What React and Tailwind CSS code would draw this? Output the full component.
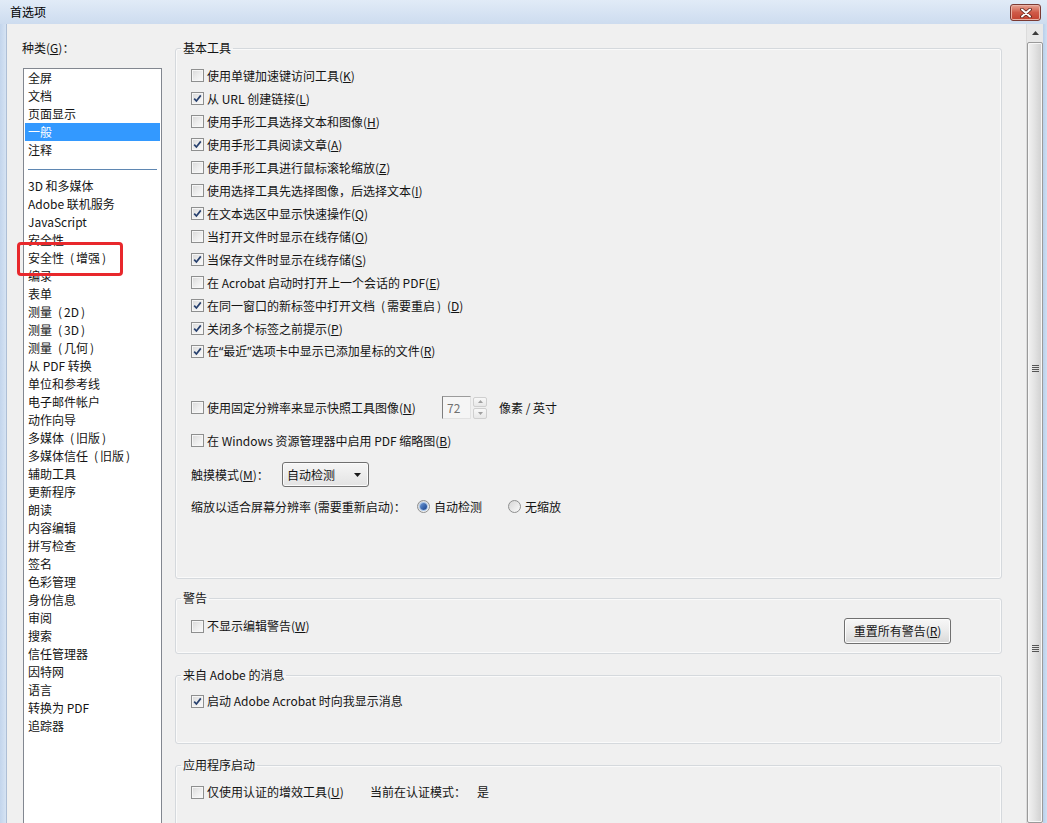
import React from "react";

function Check({ checked }) {
  return (
    <span className="relative flex-none w-[13px] h-[13px] border border-[#8e8f8f] bg-gradient-to-br from-[#d8d8d8] via-[#ececec] to-[#fbfbfb] shadow-[inset_0_0_0_1px_#f6f6f6]">
      {checked && (
        <svg className="absolute left-[1px] top-[1px]" width="9" height="9" viewBox="0 0 9 9">
          <polyline points="1.2,4.6 3.4,7 7.8,1.4" fill="none" stroke="#27406e" strokeWidth="1.7" />
        </svg>
      )}
    </span>
  );
}

function Radio({ checked }) {
  return (
    <span className="flex-none w-[13px] h-[13px] rounded-full border border-[#8e8f8f] bg-gradient-to-br from-[#d6d6d6] to-[#fafafa] flex items-center justify-center">
      {checked && <span className="w-[7px] h-[7px] rounded-full bg-gradient-to-br from-[#6f9ad6] to-[#123f8c] shadow-[0_0_0_1px_#a9c6ea]" />}
    </span>
  );
}

function CRow({ checked, children, className = "" }) {
  return (
    <div className={"flex items-center gap-[3px] " + className}>
      <Check checked={checked} />
      <span className="whitespace-nowrap">{children}</span>
    </div>
  );
}

function Group({ title, className = "", children }) {
  return (
    <fieldset className={"flex-none border border-[#d5d9dd] rounded-[3px] shadow-[inset_0_0_0_1px_#fafafa] " + className}>
      <legend className="ml-[5px] px-[2px] leading-[16px] whitespace-nowrap">{title}</legend>
      {children}
    </fieldset>
  );
}

const Q = ({ children }) => <span className="font-['Noto_Sans',sans-serif]">{children}</span>;
const LP = () => <span className="inline-block w-[12px] text-right pr-[2px]">(</span>;
const RP = () => <span className="inline-block w-[12px] text-left pl-[2px]">)</span>;

function FW({ text }) {
  const parts = [];
  let buf = "";
  [...text].forEach((ch, i) => {
    if (ch === "（" || ch === "）") {
      if (buf) parts.push(buf);
      buf = "";
      parts.push(ch === "（" ? <LP key={i} /> : <RP key={i} />);
    } else buf += ch;
  });
  if (buf) parts.push(buf);
  return <>{parts}</>;
}

const basic = [
  [false, <>使用单键加速键访问工具(<u>K</u>)</>],
  [true, <>从 URL 创建链接(<u>L</u>)</>],
  [false, <>使用手形工具选择文本和图像(<u>H</u>)</>],
  [true, <>使用手形工具阅读文章(<u>A</u>)</>],
  [false, <>使用手形工具进行鼠标滚轮缩放(<u>Z</u>)</>],
  [false, <>使用选择工具先选择图像，后选择文本(<u>I</u>)</>],
  [true, <>在文本选区中显示快速操作(<u>Q</u>)</>],
  [false, <>当打开文件时显示在线存储(<u>O</u>)</>],
  [true, <>当保存文件时显示在线存储(<u>S</u>)</>],
  [false, <>在 Acrobat 启动时打开上一个会话的 PDF(<u>E</u>)</>],
  [true, <>在同一窗口的新标签中打开文档<LP />需要重启<RP />(<u>D</u>)</>],
  [true, <>关闭多个标签之前提示(<u>P</u>)</>],
  [true, <>在<Q>“</Q>最近<Q>”</Q>选项卡中显示已添加星标的文件(<u>R</u>)</>],
];

const topItems = ["全屏", "文档", "页面显示", "一般", "注释"];
const items = [
  "3D 和多媒体", "Adobe 联机服务", "JavaScript", "安全性", "安全性（增强）", "编录", "表单",
  "测量（2D）", "测量（3D）", "测量（几何）", "从 PDF 转换", "单位和参考线", "电子邮件帐户",
  "动作向导", "多媒体（旧版）", "多媒体信任（旧版）", "辅助工具", "更新程序", "朗读", "内容编辑",
  "拼写检查", "签名", "色彩管理", "身份信息", "审阅", "搜索", "信任管理器", "因特网", "语言",
  "转换为 PDF", "追踪器",
];

function Grip({ className }) {
  return (
    <div className={"absolute left-[4px] w-[7px] flex flex-col gap-[1px] " + className}>
      <span className="h-[1px] bg-[#555]" />
      <span className="h-[1px] bg-[#555]" />
      <span className="h-[1px] bg-[#555]" />
      <span className="h-[1px] bg-[#555]" />
    </div>
  );
}

export default function App() {
  return (
    <div className="relative w-[1047px] h-[823px] overflow-hidden flex flex-col bg-[#f0f0f0] text-[12px] leading-[16px] text-[#141414] font-['Noto_Sans_CJK_SC','Microsoft_YaHei',sans-serif]">
      {/* Title bar */}
      <div className="flex-none h-[24px] flex items-start justify-between bg-gradient-to-b from-[#e1ebf7] to-[#cddcef]">
        <span className="pl-[10px] pt-[4px] leading-[16px] text-[#000]">首选项</span>
        <div className="mt-[4px] mr-[6px] w-[31px] h-[17px] rounded-[3px] border border-[#7b3a33] bg-gradient-to-b from-[#e6a394] via-[#cf5a48] to-[#c2412f] shadow-[inset_0_0_0_1px_#eab3a6] flex items-center justify-center">
          <svg width="12" height="10" viewBox="0 0 12 10">
            <path d="M2 1.5 L10 8.5 M10 1.5 L2 8.5" stroke="#5a2018" strokeWidth="3.6" strokeLinecap="round" />
            <path d="M2 1.5 L10 8.5 M10 1.5 L2 8.5" stroke="#ffffff" strokeWidth="2" strokeLinecap="round" />
          </svg>
        </div>
      </div>

      <div className="flex flex-1 min-h-0">
        {/* left frame */}
        <div className="flex-none w-[7px] bg-gradient-to-r from-[#c3d5ec] to-[#d6e3f3] border-r border-[#aebfd6]" />

        {/* content */}
        <div className="flex-1 flex min-w-0 overflow-hidden">
          {/* categories */}
          <div className="flex-none w-[168px] pl-[15px] pt-[16px] flex flex-col">
            <div className="leading-[16px] whitespace-nowrap">种类(<u>G</u>)：</div>
            <div className="mt-[12px] ml-[1px] w-[139px] h-[800px] flex-none border border-[#828790] bg-white flex flex-col">
              {topItems.map((t) => (
                <div
                  key={t}
                  className={
                    "h-[18px] leading-[18px] mx-[1px] pl-[3px] whitespace-nowrap " +
                    (t === "一般" ? "bg-[#3399ff] text-white" : "")
                  }
                >
                  {t}
                </div>
              ))}
              <div className="h-[18px] pt-[10px] px-[4px]">
                <div className="h-[1px] bg-[#5f87b2]" />
              </div>
              {items.map((t) => (
                <div key={t} className="h-[18px] leading-[18px] mx-[1px] pl-[3px] whitespace-nowrap">
                  <FW text={t} />
                </div>
              ))}
            </div>
          </div>

          {/* settings */}
          <div className="flex-none w-[827px] pt-[16px] flex flex-col">
            <Group title="基本工具" className="h-[539px]">
              <div className="pl-[15px] pt-[8px] flex flex-col">
                {basic.map(([c, l], i) => (
                  <CRow key={i} checked={c} className="h-[23px]">
                    {l}
                  </CRow>
                ))}
                <div className="mt-[33px] h-[23px] flex items-center">
                  <CRow checked={false} className="w-[251px] h-[23px]">
                    使用固定分辨率来显示快照工具图像(<u>N</u>)
                  </CRow>
                  <div className="w-[29px] h-[23px] border border-t-[#9b9b9b] border-l-[#7e7e7e] border-r-[#e2e2e2] border-b-[#e2e2e2] bg-[#f5f5f5] pl-[4px] leading-[21px] text-[#707070]">
                    72
                  </div>
                  <div className="ml-[2px] w-[14px] h-[22px] flex flex-col gap-[1px]">
                    <div className="flex-1 border border-[#cfcfcf] rounded-[2px] bg-gradient-to-b from-[#f8f8f8] to-[#e8e8e8] flex items-center justify-center">
                      <svg width="5" height="3" viewBox="0 0 5 3"><path d="M0 3 L2.5 0 L5 3 Z" fill="#a0a0a0" /></svg>
                    </div>
                    <div className="flex-1 border border-[#cfcfcf] rounded-[2px] bg-gradient-to-b from-[#f8f8f8] to-[#e8e8e8] flex items-center justify-center">
                      <svg width="5" height="3" viewBox="0 0 5 3"><path d="M0 0 L2.5 3 L5 0 Z" fill="#a0a0a0" /></svg>
                    </div>
                  </div>
                  <span className="ml-[12px] whitespace-nowrap">像素 / 英寸</span>
                </div>
                <CRow checked={false} className="mt-[10px] h-[23px]">
                  在 Windows 资源管理器中启用 PDF 缩略图(<u>B</u>)
                </CRow>
                <div className="mt-[10px] h-[25px] flex items-center">
                  <span className="w-[91px] whitespace-nowrap">触摸模式(<u>M</u>)：</span>
                  <div className="w-[87px] h-[25px] border border-[#707070] rounded-[3px] bg-gradient-to-b from-[#f6f6f6] to-[#e3e3e3] shadow-[inset_0_0_0_1px_#fbfbfb] flex items-center">
                    <span className="flex-1 pl-[4px] whitespace-nowrap">自动检测</span>
                    <span className="w-[22px] h-full flex items-center justify-center">
                      <svg width="7" height="4" viewBox="0 0 7 4"><path d="M0 0 L7 0 L3.5 4 Z" fill="#1a1a1a" /></svg>
                    </span>
                  </div>
                </div>
                <div className="mt-[8px] h-[23px] flex items-center">
                  <span className="w-[226px] whitespace-nowrap">缩放以适合屏幕分辨率 (需要重新启动)：</span>
                  <Radio checked />
                  <span className="ml-[4px] whitespace-nowrap">自动检测</span>
                  <span className="ml-[26px]"><Radio /></span>
                  <span className="ml-[4px] whitespace-nowrap">无缩放</span>
                </div>
              </div>
            </Group>

            <Group title="警告" className="mt-[11px] h-[64px]">
              <div className="pl-[15px] pr-[50px] pt-[12px] flex items-start justify-between">
                <CRow checked={false} className="h-[16px]">
                  不显示编辑警告(<u>W</u>)
                </CRow>
                <div className="w-[107px] h-[26px] border border-[#707070] rounded-[3px] bg-gradient-to-b from-[#f7f7f7] via-[#ebebeb] to-[#d8d8d8] shadow-[inset_0_0_0_1px_#fcfcfc] flex items-center justify-center whitespace-nowrap">
                  重置所有警告(<u>R</u>)
                </div>
              </div>
            </Group>

            <Group title="来自 Adobe 的消息" className="mt-[13px] h-[77px]">
              <div className="pl-[15px] pt-[10px]">
                <CRow checked className="h-[16px]">
                  启动 Adobe Acrobat 时向我显示消息
                </CRow>
              </div>
            </Group>

            <Group title="应用程序启动" className="mt-[13px] h-[120px]">
              <div className="pl-[15px] pt-[11px] flex items-center">
                <CRow checked={false} className="w-[179px] h-[16px]">
                  仅使用认证的增效工具(<u>U</u>)
                </CRow>
                <span className="whitespace-nowrap">当前在认证模式：</span>
                <span className="ml-[11px]">是</span>
              </div>
            </Group>
          </div>
        </div>

        {/* scrollbar */}
        <div className="flex-none w-[17px] flex flex-col bg-[#e8e8e8] border-l border-[#dcdcdc]">
          <div className="h-[18px] flex items-center justify-center">
            <svg width="7" height="4" viewBox="0 0 7 4"><path d="M0 4 L3.5 0 L7 4 Z" fill="#3c3c3c" /></svg>
          </div>
          <div className="relative flex-1 border border-[#9a9a9a] rounded-[2px] bg-gradient-to-r from-[#f2f2f2] via-[#e2e2e2] to-[#cfcfcf] shadow-[inset_0_0_0_1px_#f7f7f7]">
            <Grip className="top-[322px]" />
            <Grip className="top-[602px]" />
          </div>
        </div>
        {/* right frame */}
        <div className="flex-none w-[4px] bg-gradient-to-r from-[#b9cfea] to-[#cfe0f3]" />
      </div>

      {/* highlight annotation */}
      <div className="absolute left-[17px] top-[242px] w-[106px] h-[34px] border-[3px] border-[#e8282c] rounded-[4px]" />
    </div>
  );
}
